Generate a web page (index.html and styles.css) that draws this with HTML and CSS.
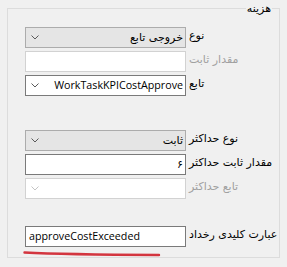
FILE: index.html
```html
<!DOCTYPE html>
<html lang="fa">
<head>
    <meta charset="UTF-8">
    <title>هزینه</title>
    <link rel="stylesheet" href="styles.css">
</head>
<body>
    <div class="group">
        <span class="group-title">هزینه</span>

        <div class="row">
            <div class="combo">
                <svg class="arrow" width="8" height="5" viewBox="0 0 8 5"><path d="M0.5 0.5 L4 4 L7.5 0.5" fill="none" stroke="#5a5a5a" stroke-width="1"/></svg>
                <span class="value">خروجی تابع</span>
            </div>
            <label class="label">نوع</label>
        </div>

        <div class="row">
            <div class="textbox disabled"></div>
            <label class="label off">مقدار ثابت</label>
        </div>

        <div class="row">
            <div class="combo open">
                <svg class="arrow" width="8" height="5" viewBox="0 0 8 5"><path d="M0.5 0.5 L4 4 L7.5 0.5" fill="none" stroke="#5a5a5a" stroke-width="1"/></svg>
                <span class="value latin">WorkTaskKPICostApprove</span>
            </div>
            <label class="label">تابع</label>
        </div>

        <div class="row gap-big">
            <div class="combo">
                <svg class="arrow" width="8" height="5" viewBox="0 0 8 5"><path d="M0.5 0.5 L4 4 L7.5 0.5" fill="none" stroke="#5a5a5a" stroke-width="1"/></svg>
                <span class="value">ثابت</span>
            </div>
            <label class="label">نوع حداکثر</label>
        </div>

        <div class="row">
            <div class="textbox"><span class="value">۶</span></div>
            <label class="label">مقدار ثابت حداکثر</label>
        </div>

        <div class="row">
            <div class="combo open disabled">
                <svg class="arrow" width="8" height="5" viewBox="0 0 8 5"><path d="M0.5 0.5 L4 4 L7.5 0.5" fill="none" stroke="#c4c4c4" stroke-width="1"/></svg>
            </div>
            <label class="label off">تابع حداکثر</label>
        </div>

        <div class="row gap-mid">
            <div class="textbox ltr"><span class="value latin">approveCostExceeded</span></div>
            <label class="label">عبارت کلیدی رخداد</label>
        </div>

        <svg class="underline" width="140" height="8" viewBox="0 0 140 8">
            <path d="M1.5 2.5 Q 40 4.5 136 5" fill="none" stroke="#d3353f" stroke-width="2.4" stroke-linecap="round"/>
        </svg>
    </div>
</body>
</html>
```

FILE: styles.css
```css
body {
    margin: 0;
    background-color: #f0f0f0;
    font-family: "DejaVu Sans", sans-serif;
    font-size: 11px;
    color: #000;
}

.group {
    position: relative;
    box-sizing: border-box;
    margin: 8px 7px 0 7px;
    height: 250px;
    border: 1px solid #dcdcdc;
    padding: 18px 0 0 17px;
}

.group-title {
    position: absolute;
    top: -8px;
    right: 7px;
    padding: 0 1px;
    background-color: #f0f0f0;
    line-height: 15px;
}

.row {
    display: flex;
    align-items: flex-start;
    margin-bottom: 3px;
}

.row.gap-big {
    margin-top: 34px;
}

.row.gap-mid {
    margin-top: 27px;
}

.combo, .textbox {
    box-sizing: border-box;
    width: 161px;
    height: 21px;
    display: flex;
    align-items: center;
    justify-content: flex-end;
    padding: 0 2px 0 5px;
    position: relative;
}

.combo {
    background-color: #e5e5e5;
    border: 1px solid #acacac;
}

.combo.open {
    background-color: #fff;
    border-color: #7a7a7a;
}

.combo.disabled, .textbox.disabled {
    background-color: #fff;
    border-color: #d2d2d2;
}

.textbox {
    background-color: #fff;
    border: 1px solid #7a7a7a;
}

.textbox.ltr {
    justify-content: flex-start;
    padding-left: 3px;
}

.arrow {
    position: absolute;
    left: 5px;
    top: 7px;
}

.value {
    direction: rtl;
    white-space: nowrap;
    line-height: 15px;
}

.latin {
    direction: ltr;
    font-family: "Open Sans", sans-serif;
    font-size: 10.7px;
}

.label {
    margin-left: 3px;
    margin-top: 1px;
    direction: rtl;
    white-space: nowrap;
    line-height: 15px;
}

.label.off {
    color: #a0a0a0;
}

.underline {
    display: block;
    margin: 0 0 0 -2px;
}
```
